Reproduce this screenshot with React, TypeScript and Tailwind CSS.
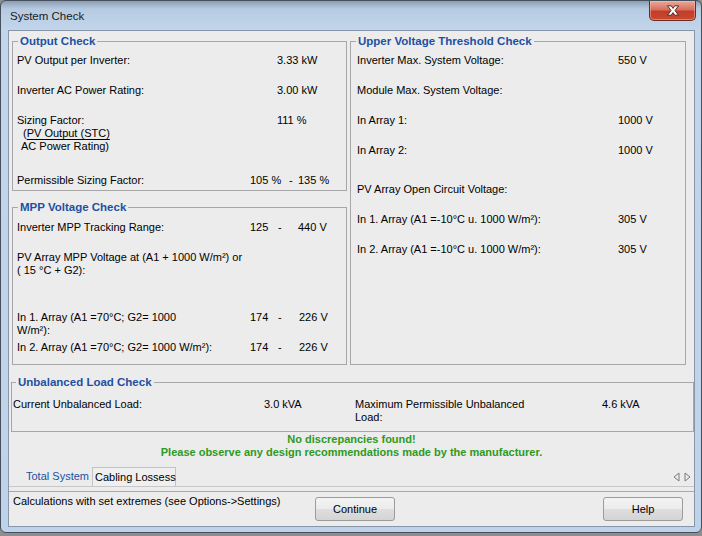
import React from 'react';

const GroupBox: React.FC<{
  title: string;
  className?: string;
  titleClass?: string;
  bodyClass: string;
  children: React.ReactNode;
}> = ({ title, className = '', titleClass = 'ml-[5px]', bodyClass, children }) => (
  <div className={`border border-[#a7a7a7] ${className}`}>
    <div
      className={`${titleClass} -mt-[8px] w-fit px-[2px] bg-[#ececec] text-[11.5px] leading-[14px] font-bold text-[#1e50a2]`}
    >
      {title}
    </div>
    <div className={`flow-root ${bodyClass}`}>{children}</div>
  </div>
);

const Range: React.FC<{ lo: string; hi: string; loW: string; dashW: string }> = ({ lo, hi, loW, dashW }) => (
  <>
    <span className={loW}>{lo}</span>
    <span className={dashW}>-</span>
    <span>{hi}</span>
  </>
);

const CloseGlyph = () => (
  <svg width="14" height="11" viewBox="0 0 14 11">
    <path
      d="M1.5 0.8 H5.2 L7 3.4 L8.8 0.8 H12.5 L9 5.5 L12.5 10.2 H8.8 L7 7.6 L5.2 10.2 H1.5 L5 5.5 Z"
      fill="#ffffff"
      stroke="#4a1d15"
      strokeWidth="0.9"
      strokeLinejoin="round"
    />
  </svg>
);

const btn =
  'w-[80px] h-[24px] rounded-[3px] border border-[#9c9c9c] bg-[linear-gradient(to_bottom,#f3f3f3_0%,#ebebeb_50%,#dedede_51%,#d4d4d4_100%)] text-[11px] leading-[13px]';

const App: React.FC = () => {
  return (
    <div className="w-[702px] h-[536px] bg-[#8e8e8e] overflow-hidden font-['Liberation_Sans',Arial,sans-serif] text-[11px] leading-[13px] text-black">
      <div className="w-[702px] h-[533px] border border-[#46505c] rounded-[6px] bg-[linear-gradient(to_bottom,#8d9eb3_0px,#b6cbe2_8px,#c2d5ea_29px,#bed3e9_100%)] flex flex-col pl-[7px] pr-[6px] pb-[5px]">
        {/* title bar */}
        <div className="h-[29px] shrink-0 flex items-start">
          <span className="ml-[2px] mt-[8px] text-[11.5px] leading-[14px] text-[#1b1b1b]">System Check</span>
          <div className="ml-auto mr-[-1px] w-[47px] h-[20px] rounded-b-[5px] border border-t-0 border-[#6e2a20] bg-[linear-gradient(to_bottom,#e9aa9a_0%,#d6705d_45%,#c23d28_55%,#c9492f_100%)] flex items-center justify-center shadow-[inset_0_0_0_1px_rgba(255,200,190,0.45)]">
            <CloseGlyph />
          </div>
        </div>

        {/* client area */}
        <div className="flex-1 min-h-0 border border-[#8796a8] bg-[#ececec] flex flex-col">
          <div className="mt-[10px] ml-[3px] flex items-start gap-[3px]">
            <div className="w-[335px] flex flex-col">
              <GroupBox title="Output Check" bodyClass="h-[142px] pl-[4px]">
                <div className="mt-[6px] flex">
                  <span className="w-[260px]">PV Output per Inverter:</span>
                  <span>3.33 kW</span>
                </div>
                <div className="mt-[17px] flex">
                  <span className="w-[260px]">Inverter AC Power Rating:</span>
                  <span>3.00 kW</span>
                </div>
                <div className="mt-[17px] flex">
                  <div className="w-[260px]">
                    <div>Sizing Factor:</div>
                    <div className="pl-[6px]">
                      (<span className="underline underline-offset-[2px]">PV Output (STC)</span>
                    </div>
                    <div className="pl-[4px]">AC Power Rating)</div>
                  </div>
                  <span>111 %</span>
                </div>
                <div className="mt-[21px] flex">
                  <span className="w-[233px]">Permissible Sizing Factor:</span>
                  <Range lo="105 %" hi="135 %" loW="w-[39px]" dashW="w-[9px]" />
                </div>
              </GroupBox>

              <GroupBox title="MPP Voltage Check" className="mt-[16px]" bodyClass="h-[150px] pl-[4px]">
                <div className="mt-[7px] flex">
                  <span className="w-[233px]">Inverter MPP Tracking Range:</span>
                  <Range lo="125" hi="440 V" loW="w-[28px]" dashW="w-[20px]" />
                </div>
                <div className="mt-[17px]">
                  PV Array MPP Voltage at (A1 + 1000 W/m²) or
                  <br />( 15 °C + G2):
                </div>
                <div className="mt-[34px] flex">
                  <span className="w-[233px]">
                    In 1. Array (A1 =70°C; G2= 1000
                    <br />
                    W/m²):
                  </span>
                  <Range lo="174" hi="226 V" loW="w-[28px]" dashW="w-[21px]" />
                </div>
                <div className="mt-[4px] flex">
                  <span className="w-[233px]">In 2. Array (A1 =70°C; G2= 1000 W/m²):</span>
                  <Range lo="174" hi="226 V" loW="w-[28px]" dashW="w-[21px]" />
                </div>
              </GroupBox>
            </div>

            <GroupBox title="Upper Voltage Threshold Check" className="w-[336px]" bodyClass="h-[316px] pl-[6px]">
              <div className="mt-[6px] flex">
                <span className="w-[261px]">Inverter Max. System Voltage:</span>
                <span>550 V</span>
              </div>
              <div className="mt-[17px]">Module Max. System Voltage:</div>
              <div className="mt-[17px] flex">
                <span className="w-[261px]">In Array 1:</span>
                <span>1000 V</span>
              </div>
              <div className="mt-[17px] flex">
                <span className="w-[261px]">In Array 2:</span>
                <span>1000 V</span>
              </div>
              <div className="mt-[26px]">PV Array Open Circuit Voltage:</div>
              <div className="mt-[17px] flex">
                <span className="w-[261px]">In 1. Array (A1 =-10°C u. 1000 W/m²):</span>
                <span>305 V</span>
              </div>
              <div className="mt-[17px] flex">
                <span className="w-[261px]">In 2. Array (A1 =-10°C u. 1000 W/m²):</span>
                <span>305 V</span>
              </div>
            </GroupBox>
          </div>

          <GroupBox
            title="Unbalanced Load Check"
            className="mt-[17px] ml-[2px]"
            titleClass="ml-[4px]"
            bodyClass="h-[42px] pl-[1px]"
          >
            <div className="mt-[9px] flex">
              <span className="w-[251px]">Current Unbalanced Load:</span>
              <span className="w-[91px]">3.0 kVA</span>
              <span className="w-[247px]">
                Maximum Permissible Unbalanced
                <br />
                Load:
              </span>
              <span>4.6 kVA</span>
            </div>
          </GroupBox>

          <div className="mt-[1px] text-center font-bold text-[#2d9a1f]">
            <div>No discrepancies found!</div>
            <div>Please observe any design recommendations made by the manufacturer.</div>
          </div>

          <div className="mt-[8px] h-[20px] shrink-0 flex border-b border-[#c8c8c8]">
            <span className="ml-[14px] px-[3px] leading-[19px] text-[#1e50a2] whitespace-nowrap">Total System</span>
            <span className="w-[84px] px-[2px] leading-[18px] border border-b-0 border-[#c2c2c2] bg-[#efefef] whitespace-nowrap">
              Cabling Lossess
            </span>
            <div className="ml-auto mr-[3px] flex items-center gap-[4px]">
              <svg width="7" height="10" viewBox="0 0 7 10">
                <path d="M6 1 L1 5 L6 9 Z" fill="none" stroke="#7a7a7a" strokeWidth="1" />
              </svg>
              <svg width="7" height="10" viewBox="0 0 7 10">
                <path d="M1 1 L6 5 L1 9 Z" fill="none" stroke="#7a7a7a" strokeWidth="1" />
              </svg>
            </div>
          </div>

          <div className="mt-[4px] flex-1 border-t border-[#a9a9a9] flex items-start">
            <span className="w-[306px] pl-[4px] pt-[3px] whitespace-nowrap">
              Calculations with set extremes (see Options-&gt;Settings)
            </span>
            <button className={`mt-[5px] ${btn}`}>Continue</button>
            <button className={`mt-[5px] ml-[208px] ${btn}`}>Help</button>
          </div>
        </div>
      </div>
    </div>
  );
};

export default App;
